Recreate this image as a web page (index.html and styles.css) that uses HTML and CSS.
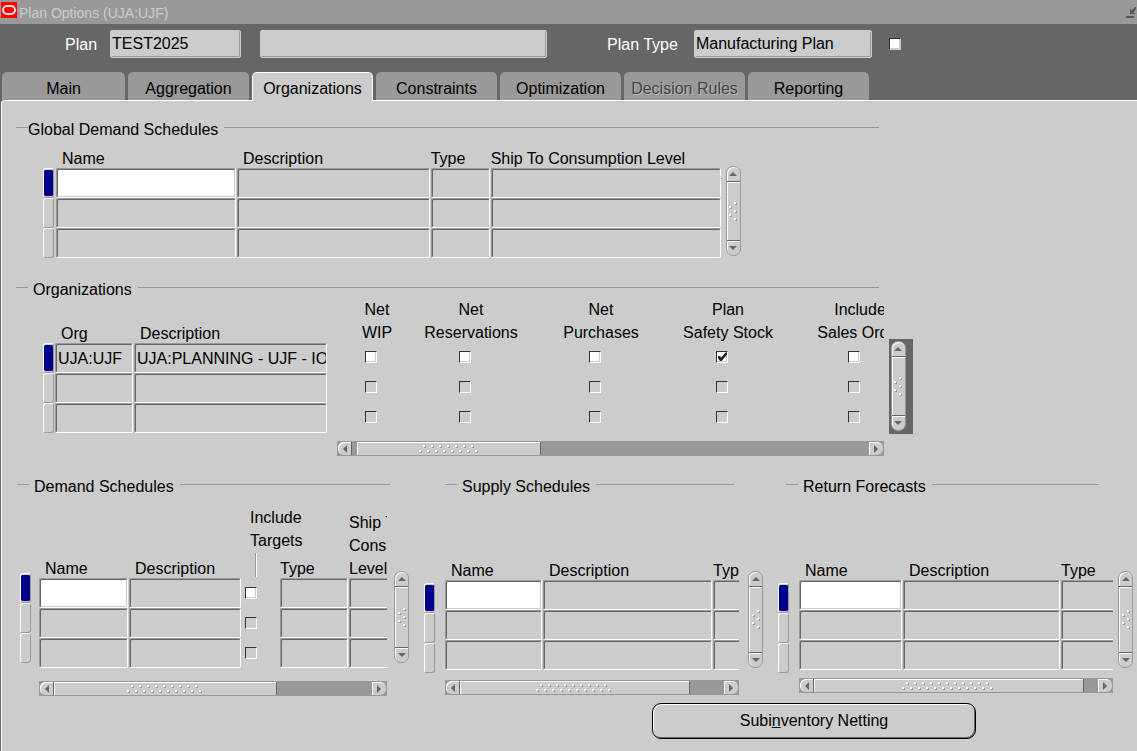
FILE: index.html
```html
<!DOCTYPE html>
<html lang="en">
<head>
    <meta charset="UTF-8">
    <meta name="viewport" content="width=device-width, initial-scale=1.0">
    <title>Plan Options (UJA:UJF)</title>
    <link rel="stylesheet" href="styles.css">
</head>
<body>
    <!-- shared scrollbar grips and arrows -->
    <svg class="defs" width="0" height="0" aria-hidden="true">
        <defs>
            <pattern id="dots-h" width="8" height="8" patternUnits="userSpaceOnUse">
                <path d="M6 1h1v2h-2v-1h1zM2 6h1v2h-2v-1h1z" fill="#999"/>
                <path d="M4 0h2v2h-2zM0 5h2v2h-2z" fill="#fff"/>
            </pattern>
            <symbol id="grip-v" viewBox="0 0 8 19">
                <path d="M6 1h2v2h-2zM1 5h2v2h-2zM6 9h2v2h-2zM1 13h2v2h-2zM6 17h2v2h-2z" fill="#999"/>
                <path d="M5 0h2v2h-2zM0 4h2v2h-2zM5 8h2v2h-2zM0 12h2v2h-2zM5 16h2v2h-2z" fill="#fff"/>
            </symbol>
            <symbol id="up" viewBox="0 0 8 4"><path d="M0 4L4 0L8 4z" fill="#666"/></symbol>
            <symbol id="down" viewBox="0 0 8 4"><path d="M0 0L4 4L8 0z" fill="#666"/></symbol>
            <symbol id="left" viewBox="0 0 4 8"><path d="M4 0L0 4L4 8z" fill="#666"/></symbol>
            <symbol id="right" viewBox="0 0 4 8"><path d="M0 0L4 4L0 8z" fill="#666"/></symbol>
        </defs>
    </svg>

    <div class="titlebar">
        <svg class="logo" width="16" height="16" viewBox="0 0 16 16" aria-hidden="true">
            <rect width="16" height="16" fill="#f00"/>
            <rect x="2" y="4" width="12" height="8" rx="4" fill="none" stroke="#fdd" stroke-width="2"/>
        </svg>
        <span class="title">Plan Options (UJA:UJF)</span>
        <svg class="restore" width="11" height="11" viewBox="0 0 11 11" aria-hidden="true">
            <path d="M0 9h8v2h-8zM4 2h1v2l4-4h1v2l-3 4h2v1h-5z" fill="#555"/>
        </svg>
    </div>

    <div class="header">
        <label for="plan">Plan</label>
        <input class="head-field plan" id="plan" type="text" value="TEST2025">
        <input class="head-field plan-desc" type="text" aria-label="Plan description">
        <label class="type-label" for="plan-type">Plan Type</label>
        <input class="head-field plan-type" id="plan-type" type="text" value="Manufacturing Plan">
        <input class="check" type="checkbox" aria-label="Plan flag">
    </div>

    <div class="tabs" role="tablist">
        <button class="tab" role="tab">Main</button>
        <button class="tab" role="tab">Aggregation</button>
        <button class="tab active" role="tab" aria-selected="true">Organizations</button>
        <button class="tab" role="tab">Constraints</button>
        <button class="tab" role="tab">Optimization</button>
        <button class="tab" role="tab" disabled>Decision Rules</button>
        <button class="tab" role="tab">Reporting</button>
    </div>

    <main class="panel">
        <section class="section global">
            <h2 class="legend flush">Global Demand Schedules</h2>
            <div class="block">
                <div class="markers"><span class="marker current"></span><span class="marker"></span><span class="marker"></span></div>
                <div class="grid-area">
                    <table class="records">
                        <colgroup><col class="c-name"><col><col class="c-type"><col class="c-ship"></colgroup>
                        <thead><tr><th>Name</th><th>Description</th><th class="tight">Type</th><th class="tight">Ship To Consumption Level</th></tr></thead>
                        <tbody>
                            <tr><td><input class="field entry" type="text" aria-label="Name 1"></td><td><input class="field" type="text" aria-label="Description 1"></td><td><input class="field" type="text" aria-label="Type 1"></td><td><input class="field" type="text" aria-label="Ship To Consumption Level 1"></td></tr>
                            <tr><td><input class="field" type="text" aria-label="Name 2"></td><td><input class="field" type="text" aria-label="Description 2"></td><td><input class="field" type="text" aria-label="Type 2"></td><td><input class="field" type="text" aria-label="Ship To Consumption Level 2"></td></tr>
                            <tr><td><input class="field" type="text" aria-label="Name 3"></td><td><input class="field" type="text" aria-label="Description 3"></td><td><input class="field" type="text" aria-label="Type 3"></td><td><input class="field" type="text" aria-label="Ship To Consumption Level 3"></td></tr>
                        </tbody>
                    </table>
                </div>
                <div class="vscroll">
                    <button aria-label="Scroll up"><svg width="8" height="4"><use href="#up"/></svg></button>
                    <div class="vthumb"><svg width="8" height="19"><use href="#grip-v"/></svg></div>
                    <button aria-label="Scroll down"><svg width="8" height="4"><use href="#down"/></svg></button>
                </div>
            </div>
        </section>

        <section class="section orgs">
            <h2 class="legend">Organizations</h2>
            <div class="block">
                <div class="markers"><span class="marker current"></span><span class="marker"></span><span class="marker"></span></div>
                <div class="org-table">
                    <table class="records">
                        <colgroup><col class="c-org"><col></colgroup>
                        <thead><tr><th>Org</th><th>Description</th></tr></thead>
                        <tbody>
                            <tr><td><input class="field" type="text" aria-label="Org 1" value="UJA:UJF"></td><td><input class="field" type="text" aria-label="Description 1" value="UJA:PLANNING - UJF - IO"></td></tr>
                            <tr><td><input class="field" type="text" aria-label="Org 2"></td><td><input class="field" type="text" aria-label="Description 2"></td></tr>
                            <tr><td><input class="field" type="text" aria-label="Org 3"></td><td><input class="field" type="text" aria-label="Description 3"></td></tr>
                        </tbody>
                    </table>
                </div>
                <div class="grid-area">
                    <table class="records checks">
                        <colgroup><col class="k-wip"><col class="k-res"><col class="k-pur"><col class="k-saf"><col class="k-ord"></colgroup>
                        <thead>
                            <tr>
                                <th><span>Net</span><span>WIP</span></th>
                                <th><span>Net</span><span>Reservations</span></th>
                                <th><span>Net</span><span>Purchases</span></th>
                                <th><span>Plan</span><span>Safety Stock</span></th>
                                <th><span>Include</span><span>Sales Order</span></th>
                            </tr>
                        </thead>
                        <tbody>
                            <tr><td><input class="check" type="checkbox" aria-label="Net WIP 1"></td><td><input class="check" type="checkbox" aria-label="Net Reservations 1"></td><td><input class="check" type="checkbox" aria-label="Net Purchases 1"></td><td><input class="check" type="checkbox" aria-label="Plan Safety Stock 1" checked></td><td><input class="check" type="checkbox" aria-label="Include Sales Order 1"></td></tr>
                            <tr><td><input class="check" type="checkbox" aria-label="Net WIP 2" disabled></td><td><input class="check" type="checkbox" aria-label="Net Reservations 2" disabled></td><td><input class="check" type="checkbox" aria-label="Net Purchases 2" disabled></td><td><input class="check" type="checkbox" aria-label="Plan Safety Stock 2" disabled></td><td><input class="check" type="checkbox" aria-label="Include Sales Order 2" disabled></td></tr>
                            <tr><td><input class="check" type="checkbox" aria-label="Net WIP 3" disabled></td><td><input class="check" type="checkbox" aria-label="Net Reservations 3" disabled></td><td><input class="check" type="checkbox" aria-label="Net Purchases 3" disabled></td><td><input class="check" type="checkbox" aria-label="Plan Safety Stock 3" disabled></td><td><input class="check" type="checkbox" aria-label="Include Sales Order 3" disabled></td></tr>
                        </tbody>
                    </table>
                    <div class="hscroll">
                        <button class="prev" aria-label="Scroll left"><svg width="4" height="8"><use href="#left"/></svg></button>
                        <div class="track"><div class="hthumb"><svg width="60" height="8"><rect width="60" height="8" fill="url(#dots-h)"/></svg></div></div>
                        <button class="next" aria-label="Scroll right"><svg width="4" height="8"><use href="#right"/></svg></button>
                    </div>
                </div>
                <div class="focus-box">
                    <div class="vscroll">
                        <button aria-label="Scroll up"><svg width="8" height="4"><use href="#up"/></svg></button>
                        <div class="vthumb"><svg width="8" height="19"><use href="#grip-v"/></svg></div>
                        <button aria-label="Scroll down"><svg width="8" height="4"><use href="#down"/></svg></button>
                    </div>
                </div>
            </div>
        </section>

        <div class="lower">
            <section class="demand">
                <h2 class="legend">Demand Schedules</h2>
                <div class="block">
                    <div class="markers"><span class="marker current"></span><span class="marker"></span><span class="marker"></span></div>
                    <div class="grid-area">
                        <table class="records clipped">
                            <colgroup><col class="c-name"><col><col class="c-check"><col class="c-type"><col class="c-last"></colgroup>
                            <thead>
                                <tr>
                                    <th>Name</th>
                                    <th>Description</th>
                                    <th class="targets"><span>Include</span><span>Targets</span><i class="stem"></i></th>
                                    <th class="tight">Type</th>
                                    <th class="tight"><span>Ship To</span><span>Consumption</span><span>Level</span></th>
                                </tr>
                            </thead>
                            <tbody>
                                <tr><td><input class="field entry" type="text" aria-label="Name 1"></td><td><input class="field" type="text" aria-label="Description 1"></td><td class="pick"><input class="check" type="checkbox" aria-label="Include Targets 1"></td><td><input class="field" type="text" aria-label="Type 1"></td><td><input class="field" type="text" aria-label="Ship To Consumption Level 1"></td></tr>
                                <tr><td><input class="field" type="text" aria-label="Name 2"></td><td><input class="field" type="text" aria-label="Description 2"></td><td class="pick"><input class="check" type="checkbox" aria-label="Include Targets 2" disabled></td><td><input class="field" type="text" aria-label="Type 2"></td><td><input class="field" type="text" aria-label="Ship To Consumption Level 2"></td></tr>
                                <tr><td><input class="field" type="text" aria-label="Name 3"></td><td><input class="field" type="text" aria-label="Description 3"></td><td class="pick"><input class="check" type="checkbox" aria-label="Include Targets 3" disabled></td><td><input class="field" type="text" aria-label="Type 3"></td><td><input class="field" type="text" aria-label="Ship To Consumption Level 3"></td></tr>
                            </tbody>
                        </table>
                        <div class="hscroll">
                            <button class="prev" aria-label="Scroll left"><svg width="4" height="8"><use href="#left"/></svg></button>
                            <div class="track"><div class="hthumb"><svg width="76" height="8"><rect width="76" height="8" fill="url(#dots-h)"/></svg></div></div>
                            <button class="next" aria-label="Scroll right"><svg width="4" height="8"><use href="#right"/></svg></button>
                        </div>
                    </div>
                    <div class="vscroll">
                        <button aria-label="Scroll up"><svg width="8" height="4"><use href="#up"/></svg></button>
                        <div class="vthumb"><svg width="8" height="19"><use href="#grip-v"/></svg></div>
                        <button aria-label="Scroll down"><svg width="8" height="4"><use href="#down"/></svg></button>
                    </div>
                </div>
            </section>

            <section class="supply">
                <h2 class="legend">Supply Schedules</h2>
                <div class="block">
                    <div class="markers"><span class="marker current"></span><span class="marker"></span><span class="marker"></span></div>
                    <div class="grid-area">
                        <table class="records clipped">
                            <colgroup><col class="c-name"><col><col class="c-last"></colgroup>
                            <thead><tr><th>Name</th><th>Description</th><th class="tight">Type</th></tr></thead>
                            <tbody>
                                <tr><td><input class="field entry" type="text" aria-label="Name 1"></td><td><input class="field" type="text" aria-label="Description 1"></td><td><input class="field" type="text" aria-label="Type 1"></td></tr>
                                <tr><td><input class="field" type="text" aria-label="Name 2"></td><td><input class="field" type="text" aria-label="Description 2"></td><td><input class="field" type="text" aria-label="Type 2"></td></tr>
                                <tr><td><input class="field" type="text" aria-label="Name 3"></td><td><input class="field" type="text" aria-label="Description 3"></td><td><input class="field" type="text" aria-label="Type 3"></td></tr>
                            </tbody>
                        </table>
                        <div class="hscroll">
                            <button class="prev" aria-label="Scroll left"><svg width="4" height="8"><use href="#left"/></svg></button>
                            <div class="track"><div class="hthumb"><svg width="76" height="8"><rect width="76" height="8" fill="url(#dots-h)"/></svg></div></div>
                            <button class="next" aria-label="Scroll right"><svg width="4" height="8"><use href="#right"/></svg></button>
                        </div>
                    </div>
                    <div class="vscroll">
                        <button aria-label="Scroll up"><svg width="8" height="4"><use href="#up"/></svg></button>
                        <div class="vthumb"><svg width="8" height="19"><use href="#grip-v"/></svg></div>
                        <button aria-label="Scroll down"><svg width="8" height="4"><use href="#down"/></svg></button>
                    </div>
                </div>
            </section>

            <section class="returns">
                <h2 class="legend">Return Forecasts</h2>
                <div class="block">
                    <div class="markers"><span class="marker current"></span><span class="marker"></span><span class="marker"></span></div>
                    <div class="grid-area">
                        <table class="records clipped">
                            <colgroup><col class="c-name"><col><col class="c-last"></colgroup>
                            <thead><tr><th>Name</th><th>Description</th><th class="tight">Type</th></tr></thead>
                            <tbody>
                                <tr><td><input class="field entry" type="text" aria-label="Name 1"></td><td><input class="field" type="text" aria-label="Description 1"></td><td><input class="field" type="text" aria-label="Type 1"></td></tr>
                                <tr><td><input class="field" type="text" aria-label="Name 2"></td><td><input class="field" type="text" aria-label="Description 2"></td><td><input class="field" type="text" aria-label="Type 2"></td></tr>
                                <tr><td><input class="field" type="text" aria-label="Name 3"></td><td><input class="field" type="text" aria-label="Description 3"></td><td><input class="field" type="text" aria-label="Type 3"></td></tr>
                            </tbody>
                        </table>
                        <div class="hscroll">
                            <button class="prev" aria-label="Scroll left"><svg width="4" height="8"><use href="#left"/></svg></button>
                            <div class="track"><div class="hthumb"><svg width="92" height="8"><rect width="92" height="8" fill="url(#dots-h)"/></svg></div></div>
                            <button class="next" aria-label="Scroll right"><svg width="4" height="8"><use href="#right"/></svg></button>
                        </div>
                    </div>
                    <div class="vscroll">
                        <button aria-label="Scroll up"><svg width="8" height="4"><use href="#up"/></svg></button>
                        <div class="vthumb"><svg width="8" height="19"><use href="#grip-v"/></svg></div>
                        <button aria-label="Scroll down"><svg width="8" height="4"><use href="#down"/></svg></button>
                    </div>
                </div>
            </section>
        </div>

        <div class="actions">
            <button class="netting">Subi<u>n</u>ventory Netting</button>
        </div>
    </main>
</body>
</html>
```
FILE: styles.css
```css
* { box-sizing: border-box; }
body { margin: 0; min-height: 100vh; display: flex; flex-direction: column; background: #666; color: #000; font: 16px/18px "Liberation Sans", Arial, sans-serif; }
button, input { font: inherit; color: inherit; margin: 0; padding: 0; }
button { border: 0; background: none; }
svg { display: block; flex: none; }
.defs { position: absolute; }

/* window title */
.titlebar { height: 24px; display: flex; align-items: center; background: #999; color: #ccc; font-size: 14px; padding-left: 1px; }
.logo { margin-bottom: 4px; }
.title { margin-left: 2px; padding-top: 2px; flex: 1; }

/* plan header */
.header { display: flex; align-items: center; height: 48px; padding: 0 0 8px 65px; color: #fff; }
.header label { padding-top: 2px; }
.head-field { height: 28px; border: 1px solid #ccc; border-radius: 2px; background: #ccc; box-shadow: inset -1px -1px #999; color: #000; padding: 0 0 0 1px; }
.plan { width: 131px; margin-left: 13px; }
.plan-desc { width: 287px; margin-left: 19px; }
.type-label { margin-left: 60px; }
.plan-type { width: 178px; margin: 0 17px 0 16px; }

/* tabs */
.tabs { display: flex; gap: 3px; padding-left: 2px; height: 28px; }
.tab { width: 121px; height: 28px; padding-top: 5px; background: #999; border-radius: 5px 5px 0 0; white-space: nowrap; }
.tab:first-child { width: 123px; }
.tab.active { height: 29px; position: relative; padding-top: 3px; background: #ccc; border: 1px solid #fff; border-bottom: 0; }
.tab:disabled { color: #444; text-shadow: 1px 1px #bbb; }

.panel { flex: 1; margin-left: 1px; padding-top: 19px; background: #ccc; border: solid #fff; border-width: 1px 0 0 1px; border-top-left-radius: 4px; }
.section { width: 79%; margin-left: 14px; }
.orgs { margin-top: 22px; }

/* titled rule above every block */
.legend { display: flex; margin: 0; font-size: 16px; font-weight: normal; line-height: 20px; white-space: nowrap; }
.legend::before, .legend::after { content: ""; height: 1px; margin-top: 7px; background: #999; }
.legend::before { width: 12px; margin-right: 5px; }
.legend::after { flex: 1; margin-left: 6px; }
.legend.flush::before { margin-right: 0; }
.section .legend { margin-right: 34px; }

.block { display: flex; align-items: flex-start; }
.grid-area { flex: 1; min-width: 0; overflow: hidden; }

/* record tables */
.records { width: 100%; table-layout: fixed; border-collapse: collapse; }
.records th { padding: 0 0 0 6px; text-align: left; vertical-align: bottom; font-weight: normal; white-space: nowrap; }
.records th.tight { padding-left: 0; }
.records th span { display: block; }
.records th span + span { margin-top: 5px; }
.records td { height: 30px; padding: 0 1px 0 0; vertical-align: top; }
.clipped { width: calc(100% + 24px); }
.field { display: block; width: 100%; height: 30px; border: 1px solid; border-color: #999 #fff #fff #999; border-radius: 2px; background: #ccc; box-shadow: inset 1px 1px #666; padding: 1px 0 0 2px; }
.field.entry { background: #fff; box-shadow: inset 1px 1px #666, inset -1px -1px #ccc; }

.marker { display: block; width: 11px; height: 30px; border: 1px solid; border-color: #fff #999 #999 #fff; border-radius: 3px; padding: 1px 0; }
.marker.current { background: #00008b content-box; }

.check { appearance: none; flex: none; display: block; width: 12px; height: 12px; border: 1px solid; border-color: #333 #fff #fff #333; background: #fff; box-shadow: inset -1px -1px #ccc; }
.check:disabled { background: #ccc; box-shadow: none; }
.check:checked::before { content: ""; display: block; width: 10px; height: 9px; background: #222; clip-path: polygon(10% 45%, 30% 45%, 40% 62%, 85% 5%, 100% 5%, 100% 30%, 45% 100%, 30% 100%, 10% 70%); }
.header .check { border-color: #333 #ccc #ccc #333; }

/* scrollbars */
.vscroll { flex: none; display: flex; flex-direction: column; width: 15px; height: 90px; border: 1px solid #999; border-radius: 7px; background: #ccc; box-shadow: inset 1px 1px #fff; }
.vscroll button { height: 14px; display: flex; align-items: center; justify-content: center; }
.vthumb { flex: 1; display: flex; align-items: center; justify-content: center; border-top: 1px solid #666; border-bottom: 1px solid #666; box-shadow: inset 1px 1px #fff, 0 1px #fff; }
.hscroll { display: flex; height: 15px; padding: 1px; background: #999; }
.hscroll button { width: 14px; display: flex; align-items: center; justify-content: center; background: #ccc; }
.hscroll .prev { border-radius: 6px 0 0 6px; border-right: 1px solid #666; box-shadow: inset 1px 1px #fff; }
.hscroll .next { border-radius: 0 6px 6px 0; box-shadow: inset 1px 1px #fff; }
.track { flex: 1; display: flex; }
.hthumb { width: 70%; display: flex; align-items: center; justify-content: center; background: #ccc; border-right: 1px solid #666; box-shadow: inset 1px 1px #fff; }

/* global demand schedules */
.global .block { padding: 0 172px 0 27px; }
.global .markers { margin: 28px 2px 0 0; }
.global th { height: 28px; }
.global .vscroll { margin: 26px 0 0 4px; }
.global .c-name { width: 181px; }
.global .c-type { width: 60px; }
.global .c-ship { width: 231px; }

/* organizations */
.orgs .block { padding-left: 27px; }
.orgs .markers { margin: 43px 1px 0 0; }
.orgs th { height: 43px; }
.org-table { width: 273px; margin-right: 9px; }
.c-org { width: 79px; }
.checks { width: 604px; margin-bottom: 8px; }
.orgs .checks th { padding: 0 0 1px; text-align: center; }
.checks .check { margin: 8px auto 0; }
.checks td { padding-right: 12px; }
.k-wip { width: 80px; }
.k-res { width: 108px; }
.k-pur { width: 152px; }
.k-saf { width: 102px; }
.k-ord { width: 162px; }
.orgs .track { padding-left: 5px; }
.orgs .hthumb { width: 36%; }
.focus-box { width: 24px; height: 95px; margin: 39px 0 0 5px; padding: 2px; background: #666; }

/* lower row */
.lower { display: grid; grid-template-columns: 394fr 340fr 356fr; gap: 13px; margin-top: 21px; padding: 0 4px 0 15px; }
.lower section { min-width: 0; }
.lower .vscroll { margin-top: 74px; height: 97px; }
.lower .markers { margin-top: 86px; }
.lower th { height: 83px; }
.lower .c-last { width: 50px; }

.demand .legend { margin-right: 21px; }
.demand .block { padding: 0 2px 0 3px; }
.demand .markers { margin: 76px 8px 0 0; }
.demand th { height: 81px; }
.demand th.targets { padding: 0 0 1px 8px; }
.demand .vscroll { height: 92px; margin-left: 7px; }
.demand .hscroll { margin-top: 13px; }
.demand .c-name { width: 90px; }
.demand .c-check { width: 38px; }
.demand .c-type { width: 69px; }
.demand .c-last { width: 62px; }
.pick .check { margin: 9px 0 0 3px; }
.stem { display: block; width: 2px; height: 24px; margin: 3px 0 0 5px; border-left: 1px solid #999; border-right: 1px solid #fff; }

.supply .legend { margin: 0 30px 0 21px; }
.supply .block { padding-right: 1px; }
.supply .markers { margin-right: 10px; }
.supply .hscroll { margin-top: 10px; }
.supply .hthumb { width: 87%; }
.supply .vscroll { margin-left: 9px; }
.supply .c-name { width: 98px; }

.returns .legend { margin: 0 34px 0 9px; }
.returns .block { padding-left: 1px; }
.returns .markers { margin-right: 10px; }
.returns .hscroll { margin-top: 8px; }
.returns .hthumb { width: 95%; }
.returns .vscroll { margin-left: 5px; }
.returns .c-name { width: 104px; }
.returns .c-last { width: 76px; }

.actions { padding: 7px 0 12px 650px; }
.netting { width: 324px; height: 36px; border: 1px solid #000; border-radius: 9px; background: #ccc; box-shadow: inset 1px 1px #fff, inset -1px -1px #666; }
```
